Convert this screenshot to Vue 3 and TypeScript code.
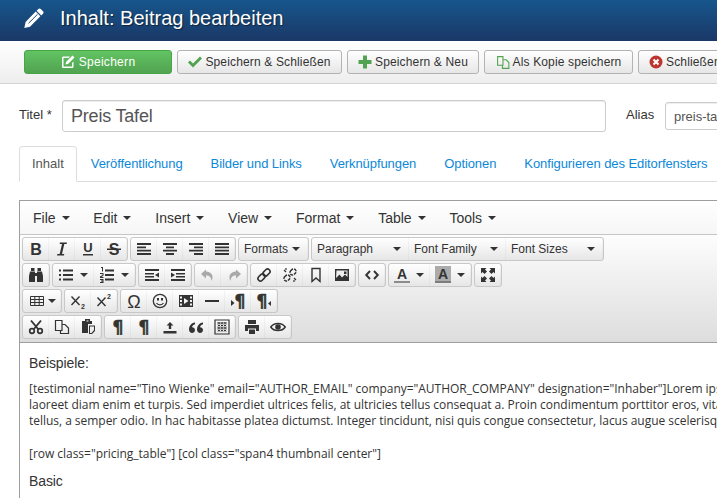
<script setup lang="ts">
const D = '#333'
const fillP = (d: string, c = D) => `<path fill="${c}" fill-rule="evenodd" d="${d}"/>`
const strokeP = (d: string, w = 1.5, c = D) => `<path fill="none" stroke="${c}" stroke-width="${w}" d="${d}"/>`
const glyph = (t: string, size: number, y: number, extra = '', x = 8, fam = 'Liberation Sans') =>
  `<text x="${x}" y="${y}" text-anchor="middle" font-size="${size}" font-family="${fam}, sans-serif" fill="${D}" ${extra}>${t}</text>`
const heavy = `font-weight="700" stroke="${D}" stroke-width="0.5"`

const icons: Record<string, string> = {
  bold: glyph('B', 16, 14, 'font-weight="700"'),
  italic: fillP('M6 1.500h7l-.4 1.500h-2.300L8 13h2.300l-.4 1.500H3l.4-1.500h2.300L8 3H5.600z'),
  underline: glyph('U', 13, 11, 'font-weight="700"') + fillP('M3 13h10v1.500H3z'),
  strike: glyph('S', 16, 14, 'font-weight="700"') + fillP('M1 7.500h14V9H1z'),
  alignleft: fillP('M1 2h14v2H1zM1 5.500h9v1.700H1zM1 8.700h14v1.700H1zM1 12h14v2H1z'),
  aligncenter: fillP('M1 2h14v2H1zM4 5.500h8v1.700H4zM1 8.700h14v1.700H1zM4 12h8v2H4z'),
  alignright: fillP('M1 2h14v2H1zM6 5.500h9v1.700H6zM1 8.700h14v1.700H1zM6 12h9v2H6z'),
  justify: fillP('M1 2h14v2H1zM1 5.500h14v1.700H1zM1 8.700h14v1.700H1zM1 12h14v2H1z'),
  search: fillP('M3 1h3.500v3H3zM9.500 1H13v3H9.500zM2 4.500h5V15H1V9zM9 4.500h5l1 4.500V15H9zM7 6h2v3H7z'),
  bullist: fillP('M1 2.500h2v2H1zM1 7h2v2H1zM1 11.500h2v2H1zM5 2.500h10v2H5zM5 7h10v2H5zM5 11.500h10v2H5z'),
  numlist: fillP('M6 2.500h9v2H6zM6 7h9v2H6zM6 11.500h9v2H6zM2 0h2v4.500H3V1H2zM1 6h3.500v2.500L2.500 10h2v1H1V9.500l2.500-1.500V7H1zM1 12h3.500v4H1v-1h2.500v-.5H2v-1h1.500V13H1z'),
  outdent: fillP('M1 2h14v2H1zM1 6h9v1.500H1zM1 9h9v1.500H1zM1 12h14v2H1zM15 5.500v5L11 8z'),
  indent: fillP('M1 2h14v2H1zM6 6h9v1.500H6zM6 9h9v1.500H6zM1 12h14v2H1zM1 5.500v5L5 8z'),
  undo: fillP('M6 2.500L1 7l5 4.500V8.500c3.500 0 5 1.500 5.500 5.500 2.500-5 .5-9-5.500-9.500z', '#a9a9a9'),
  redo: fillP('M10 2.500L15 7l-5 4.500V8.500c-3.500 0-5 1.500-5.500 5.500-2.500-5-.5-9 5.500-9.500z', '#a9a9a9'),
  link: `<g fill="none" stroke="${D}" stroke-width="1.600" transform="rotate(-45 8 8)"><rect x="0.500" y="5.500" width="8" height="5" rx="2.500"/><rect x="7.500" y="5.500" width="8" height="5" rx="2.500"/></g>`,
  unlink: `<g fill="none" stroke="${D}" stroke-width="1.500" stroke-dasharray="3 1" transform="rotate(-45 8 8)"><rect x="0.500" y="5.500" width="6.500" height="5" rx="2.500"/><rect x="9" y="5.500" width="6.500" height="5" rx="2.500"/></g>` + strokeP('M2 3l2 2M12 11l2 2M4 1v2M12 13v2', 1.200),
  bookmark: strokeP('M4 1.500h8v13l-4-3.500-4 3.500z', 1.400),
  image: fillP('M1 2h14v12H1z') + fillP('M2.500 3.500h11v6.500l-2.500-2.500-3 3-2.500-3-3.500 3.500z', '#eee') + fillP('M10 4.500h2.500v2.500H10z'),
  code: strokeP('M6 4L2.200 8 6 12M10 4l3.800 4L10 12', 1.900),
  forecolor: glyph('A', 14, 12, 'font-weight="700"') + fillP('M0 14h16v2H0z', '#8c8c8c'),
  backcolor: fillP('M0 -1h16v15H0z', '#ababab') + glyph('A', 14, 12, 'font-weight="700"') + fillP('M0 14h16v2H0z', '#7d7d7d'),
  fullscreen: fillP('M1 1h5.500L5 2.500 7 4.500 4.500 7l-2-2L1 6.500zM15 1v5.500L13.500 5l-2 2L9 4.500l2-2L9.500 1zM1 15V9.500L2.500 11l2-2L7 11.500l-2 2L6.500 15zM15 15H9.500l1.500-1.500-2-2L11.500 9l2 2L15 9.500z'),
  table: strokeP('M1.500 3.500h13v9h-13zM1.500 6.500h13M1.500 9.500h13M5.800 3.500v9M10.200 3.500v9', 1),
  sub: strokeP('M1.500 3.500l8 8.500M9.500 3.500l-8 8.500', 1.400) + glyph('2', 7, 15.500, 'font-weight="700"', 13),
  sup: strokeP('M1.500 4.500l8 8.500M9.500 4.500l-8 8.500', 1.400) + glyph('2', 7, 6, 'font-weight="700"', 13),
  omega: glyph('Ω', 18, 14.500),
  emoji: `<circle cx="8" cy="8" r="6.700" fill="none" stroke="${D}" stroke-width="1.300"/>` + fillP('M5 5h2v2.500H5zM9 5h2v2.500H9z') + strokeP('M4.500 10c1.500 2.500 5.500 2.500 7 0', 1.200),
  media: fillP('M1 2h14v12H1zM2 3.500v2h2v-2zM2 7v2h2V7zM2 10.500v2h2v-2zM12 3.500v2h2v-2zM12 7v2h2V7zM12 10.500v2h2v-2zM6 5v6l4.500-3z'),
  hr: fillP('M1 7h14v2H1z'),
  ltr: glyph('¶', 17, 14, heavy, 10, 'DejaVu Sans') + fillP('M1 7v6l3.500-3z'),
  rtl: glyph('¶', 17, 14, heavy, 6, 'DejaVu Sans') + fillP('M15 8v5l-3-2.500z'),
  cut: `<circle cx="4" cy="12" r="2.300" fill="none" stroke="${D}" stroke-width="1.700"/><circle cx="12" cy="12" r="2.300" fill="none" stroke="${D}" stroke-width="1.700"/>` + strokeP('M3 1.500l7.500 9M13 1.500l-7.500 9', 1.900),
  copy: strokeP('M1.500 1.500h6.500v10h-6.500zM8 5.500h3l3.500 3.500v5.500h-8v-3', 1.200),
  paste: fillP('M5 0h5v2h2v3H8v9H2V2h3zM6.500 1.500v1h2v-1z') + fillP('M9 6.500h6V12l-3 3H9z') + fillP('M10 7.500h4V11l-2.500 3H10z', '#eee'),
  pilcrow: glyph('¶', 17, 14, heavy, 8, 'DejaVu Sans'),
  upload: fillP('M8 3l3.500 3.500H9.200V10H6.800V6.500H4.500zM1.500 12h13v2.500h-13z'),
  quote: fillP('M7 3.500C3 4 1 7 1 10.500 1 12.500 2.500 14 4 14s3-1.300 3-3-1.300-2.800-3-2.800c.3-1.500 1.500-2.700 3-3zM15 3.500C11 4 9 7 9 10.500 9 12.500 10.500 14 12 14s3-1.300 3-3-1.300-2.800-3-2.800c.3-1.500 1.500-2.700 3-3z'),
  template: strokeP('M1 1h14v14H1z', 1.200) + strokeP('M3 4h10M3 6.500h10M3 9h10M3 11.500h10', 1.300) + `<path stroke="#eee" stroke-width="1" stroke-dasharray="1 2" d="M3 4h10M3 6.500h10M3 9h10M3 11.500h10"/>`,
  print: fillP('M4 1h8v4H4zM1 6h14v6h-3V9.500H4V12H1zM5 10.500h6V15H5z'),
  preview: `<path fill="none" stroke="${D}" stroke-width="1.500" d="M.8 8C4 3.300 12 3.300 15.200 8 12 12.700 4 12.700.8 8z"/><circle cx="8" cy="8" r="2.800" fill="${D}"/>`,
}

type Btn = { icon?: string; label?: string; caret?: boolean; w?: string }
type Group = { btns: Btn[] }
const b = (...n: string[]): Group => ({ btns: n.map((icon) => ({ icon })) })

const rows: Group[][] = [
  [
    b('bold', 'italic', 'underline', 'strike'),
    b('alignleft', 'aligncenter', 'alignright', 'justify'),
    { btns: [{ label: 'Formats', caret: true, w: 'lb-formats' }] },
    {
      btns: [
        { label: 'Paragraph', caret: true, w: 'lb-wide' },
        { label: 'Font Family', caret: true, w: 'lb-wide' },
        { label: 'Font Sizes', caret: true, w: 'lb-wide' },
      ],
    },
  ],
  [
    b('search'),
    { btns: [{ icon: 'bullist', caret: true, w: 'split' }, { icon: 'numlist', caret: true, w: 'split' }] },
    b('outdent', 'indent'),
    b('undo', 'redo'),
    b('link', 'unlink', 'bookmark', 'image'),
    b('code'),
    { btns: [{ icon: 'forecolor', caret: true, w: 'split' }, { icon: 'backcolor', caret: true, w: 'split' }] },
    b('fullscreen'),
  ],
  [
    { btns: [{ icon: 'table', caret: true, w: 'split-table' }] },
    b('sub', 'sup'),
    b('omega', 'emoji', 'media', 'hr', 'ltr', 'rtl'),
  ],
  [
    b('cut', 'copy', 'paste'),
    b('pilcrow', 'pilcrow', 'upload', 'quote', 'template'),
    b('print', 'preview'),
  ],
]

const menus = ['File', 'Edit', 'Insert', 'View', 'Format', 'Table', 'Tools']
const tabs = ['Inhalt', 'Veröffentlichung', 'Bilder und Links', 'Verknüpfungen', 'Optionen', 'Konfigurieren des Editorfensters']
</script>

<template>
  <div class="page">
    <header class="head">
      <svg class="pen" viewBox="0 0 20 20" width="20" height="20">
        <path fill="#fff" d="M14.300 1c.7-.7 1.800-.7 2.500 0l2.200 2.200c.7.700.7 1.800 0 2.500l-1.700 1.700-4.700-4.700z" />
        <path fill="#fff" d="M11.700 3.600l4.700 4.700L6 18.700.3 20 1.600 13.900z" />
        <path stroke="#17477a" stroke-width="1" d="M4.600 15.200L13.500 6.300" />
      </svg>
      <h1 class="title">Inhalt: Beitrag bearbeiten</h1>
    </header>

    <div class="actions">
      <button class="act act-save">
        <svg viewBox="0 0 14 14" width="14" height="14"><path fill="#fff" fill-rule="evenodd" d="M1 3c0-1 .7-1.500 1.500-1.500H9L7.500 3H2.500v8.500H11V8l1.500-1.500V11.500c0 1-.7 1.500-1.500 1.500H2.500C1.700 13 1 12.500 1 11.500z" /><path fill="#fff" d="M11.500 0.500l2 2-6.500 6.500-2.500.5.500-2.500z" /></svg>
        <span class="sp">Speichern</span>
      </button>
      <button class="act act-close">
        <svg viewBox="0 0 14 14" width="14" height="14"><path fill="#51a351" d="M0 7.500l2-2 3 3 7-7 2 2-9 9z" /></svg>
        Speichern &amp; Schließen
      </button>
      <button class="act act-new">
        <svg viewBox="0 0 14 14" width="14" height="14"><path fill="#51a351" d="M5 .5h4v4.500h4.500v4H9v4.500H5V9H.5V5H5z" /></svg>
        Speichern &amp; Neu
      </button>
      <button class="act act-copy">
        <svg viewBox="0 0 14 14" width="15" height="15"><path fill="none" stroke="#51a351" stroke-width="1" d="M1.500 1.500h5v8h-5zM6.500 4.500h3l2.500 2.500v5.500h-6v-3" /></svg>
        Als Kopie speichern
      </button>
      <button class="act act-cancel">
        <svg viewBox="0 0 14 14" width="14" height="14"><circle cx="7" cy="7" r="6.500" fill="#bd362f" /><path stroke="#fff" stroke-width="2" d="M4.500 4.500l5 5M9.500 4.500l-5 5" /></svg>
        Schließen
      </button>
    </div>

    <div class="titlerow">
      <label class="lbl">Titel *</label>
      <div class="inp inp-title">Preis Tafel</div>
      <label class="lbl lbl-alias">Alias</label>
      <div class="inp inp-alias">preis-tafel</div>
    </div>

    <nav class="tabs">
      <a v-for="(t, i) in tabs" :key="t" class="tab" :class="{ active: i === 0 }">{{ t }}</a>
    </nav>

    <section class="editor">
      <div class="menubar">
        <span v-for="m in menus" :key="m" class="menu">{{ m }}<i class="caret"></i></span>
      </div>
      <div class="toolbar">
        <div v-for="(row, r) in rows" :key="r" class="row">
          <div v-for="(g, gi) in row" :key="gi" class="group">
            <div v-for="(btn, bi) in g.btns" :key="bi" class="btn" :class="btn.w">
              <svg v-if="btn.icon" class="ico" viewBox="0 0 16 16" width="16" height="16" v-html="icons[btn.icon]"></svg>
              <span v-if="btn.label" class="lb">{{ btn.label }}</span>
              <i v-if="btn.caret" class="caret"></i>
            </div>
          </div>
        </div>
      </div>
      <div class="content">
        <p class="big">Beispiele:</p>
        <p class="small">[testimonial name="Tino Wienke" email="AUTHOR_EMAIL" company="AUTHOR_COMPANY" designation="Inhaber"]Lorem ipsum dolor sit amet<br />laoreet diam enim et turpis. Sed imperdiet ultrices felis, at ultricies tellus consequat a. Proin condimentum porttitor eros, vitae lorem ipsum dolor<br />tellus, a semper odio. In hac habitasse platea dictumst. Integer tincidunt, nisi quis congue consectetur, lacus augue scelerisque dolor sit</p>
        <p class="small">[row class="pricing_table"] [col class="span4 thumbnail center"]</p>
        <p class="big">Basic</p>
      </div>
    </section>
  </div>
</template>

<style scoped>
.page {
  width: 717px;
  height: 498px;
  overflow: hidden;
  background: #fff;
  font-family: "Liberation Sans", Arial, sans-serif;
  color: #333;
}
.head {
  height: 41px;
  display: flex;
  align-items: center;
  padding-left: 24px;
  gap: 16px;
  background: linear-gradient(#17568c, #1a3867);
}
.pen { flex: none; margin-bottom: 5px; }
.title {
  margin: 0 0 5px;
  font-size: 20px;
  font-weight: 400;
  color: #fff;
  white-space: nowrap;
  text-shadow: 1px 1px 1px rgba(0, 0, 0, 0.5);
}
.actions {
  height: 43px;
  box-sizing: border-box;
  display: flex;
  gap: 5px;
  padding: 9px 0 0 24px;
  background: linear-gradient(#fff, #eee);
  border-bottom: 1px solid #d4d4d4;
  overflow: hidden;
}
.act {
  flex: none;
  height: 24px;
  box-sizing: border-box;
  display: flex;
  align-items: center;
  justify-content: center;
  gap: 3px;
  padding: 0;
  border: 1px solid #b3b3b3;
  border-radius: 3px;
  background: linear-gradient(#fff, #e6e6e6);
  font: 12px "Liberation Sans", Arial, sans-serif;
  letter-spacing: 0.15px;
  color: #333;
}
.act-save {
  width: 148px;
  gap: 4px;
  color: #fff;
  background: linear-gradient(#62c462, #51a351);
  border-color: #46a546;
}
.sp { letter-spacing: 0.3px; }
.act-close { width: 165px; }
.act-new { width: 132px; }
.act-copy { width: 149px; gap: 2px; }
.act-cancel { width: 110px; justify-content: flex-start; padding-left: 10px; gap: 3px; }

.titlerow {
  display: flex;
  align-items: flex-start;
  padding: 16px 0 0 19px;
  height: 62px;
  box-sizing: border-box;
}
.lbl { font-size: 13px; width: 43px; flex: none; margin-top: 7px; }
.lbl-alias { width: 39px; margin: 7px 0 0 20px; }
.inp {
  flex: none;
  box-sizing: border-box;
  border: 1px solid #ccc;
  border-radius: 3px;
  background: #fff;
  box-shadow: inset 0 1px 1px rgba(0, 0, 0, 0.075);
  color: #555;
  white-space: nowrap;
  overflow: hidden;
}
.inp-title { width: 544px; height: 32px; font-size: 18px; line-height: 31px; padding-left: 8px; letter-spacing: -0.2px; }
.inp-alias { width: 120px; height: 28px; margin-top: 2px; font-size: 13px; line-height: 28px; padding-left: 8px; }

.tabs {
  display: flex;
  height: 36px;
  box-sizing: border-box;
  margin-left: 19px;
  border-bottom: 1px solid #ddd;
}
.tab {
  flex: none;
  height: 36px;
  box-sizing: border-box;
  padding: 0 13px;
  margin-right: 2px;
  line-height: 36px;
  font-size: 13px;
  letter-spacing: -0.08px;
  color: #0c88d8;
  white-space: nowrap;
}
.tab.active {
  color: #555;
  padding: 0 12px;
  margin-right: 1px;
  border: 1px solid #ddd;
  border-bottom-color: #fff;
  border-radius: 4px 4px 0 0;
  line-height: 34px;
  background: #fff;
  letter-spacing: 0;
}
.editor {
  margin: 18px 0 0 19px;
  width: 800px;
  border: 1px solid #9e9e9e;
  border-bottom: 0;
}
.menubar {
  height: 34px;
  box-sizing: border-box;
  display: flex;
  align-items: center;
  padding-left: 13px;
  gap: 23.800px;
  border-bottom: 1px solid #c5c5c5;
  background: linear-gradient(#fff, #f6f6f6);
}
.menu { font-size: 14px; color: #333; display: flex; align-items: center; }
.caret {
  display: inline-block;
  width: 0;
  height: 0;
  margin-left: 6px;
  border-left: 4px solid transparent;
  border-right: 4px solid transparent;
  border-top: 4px solid #333;
}
.toolbar {
  padding: 2px 0 2px 2px;
  height: 108px;
  box-sizing: border-box;
  display: flex;
  flex-direction: column;
  gap: 2px;
  border-bottom: 1px solid #9e9e9e;
  background: linear-gradient(#fdfdfd, #ddd);
}
.row { display: flex; gap: 2px; height: 24px; }
.group {
  display: flex;
  box-sizing: border-box;
  height: 24px;
  border: 1px solid #c8c8c8;
  border-radius: 3px;
  background: linear-gradient(#fff, #e6e6e6);
}
.btn {
  width: 26px;
  display: flex;
  align-items: center;
  justify-content: center;
  box-shadow: inset -1px 0 0 rgba(0, 0, 0, 0.03);
}
.btn .caret { margin-left: 0; }
.btn.split { width: 41px; justify-content: flex-start; padding-left: 5px; box-sizing: border-box; gap: 6px; }
.btn.split-table { width: 38px; justify-content: flex-start; padding-left: 6px; box-sizing: border-box; gap: 3px; }
.btn.lb-formats { width: 69px; justify-content: flex-start; padding-left: 5px; box-sizing: border-box; gap: 4px; }
.btn.lb-wide { width: 97px; justify-content: space-between; padding: 0 8px 0 5px; box-sizing: border-box; }
.lb { font-size: 12px; color: #333; white-space: nowrap; }
.ico { flex: none; overflow: visible; }
.content { padding: 12px 9px; background: #fff; }
.content p { margin: 0; white-space: nowrap; color: #333; }
.big { font-size: 14px; line-height: 16px; letter-spacing: -0.1px; }
.small { font-family: "Open Sans", sans-serif; font-size: 12px; line-height: 16px; letter-spacing: -0.03px; margin-top: 10px !important; }
.small + .small { margin-top: 17px !important; }
.small + .big { margin-top: 11px !important; }
</style>
